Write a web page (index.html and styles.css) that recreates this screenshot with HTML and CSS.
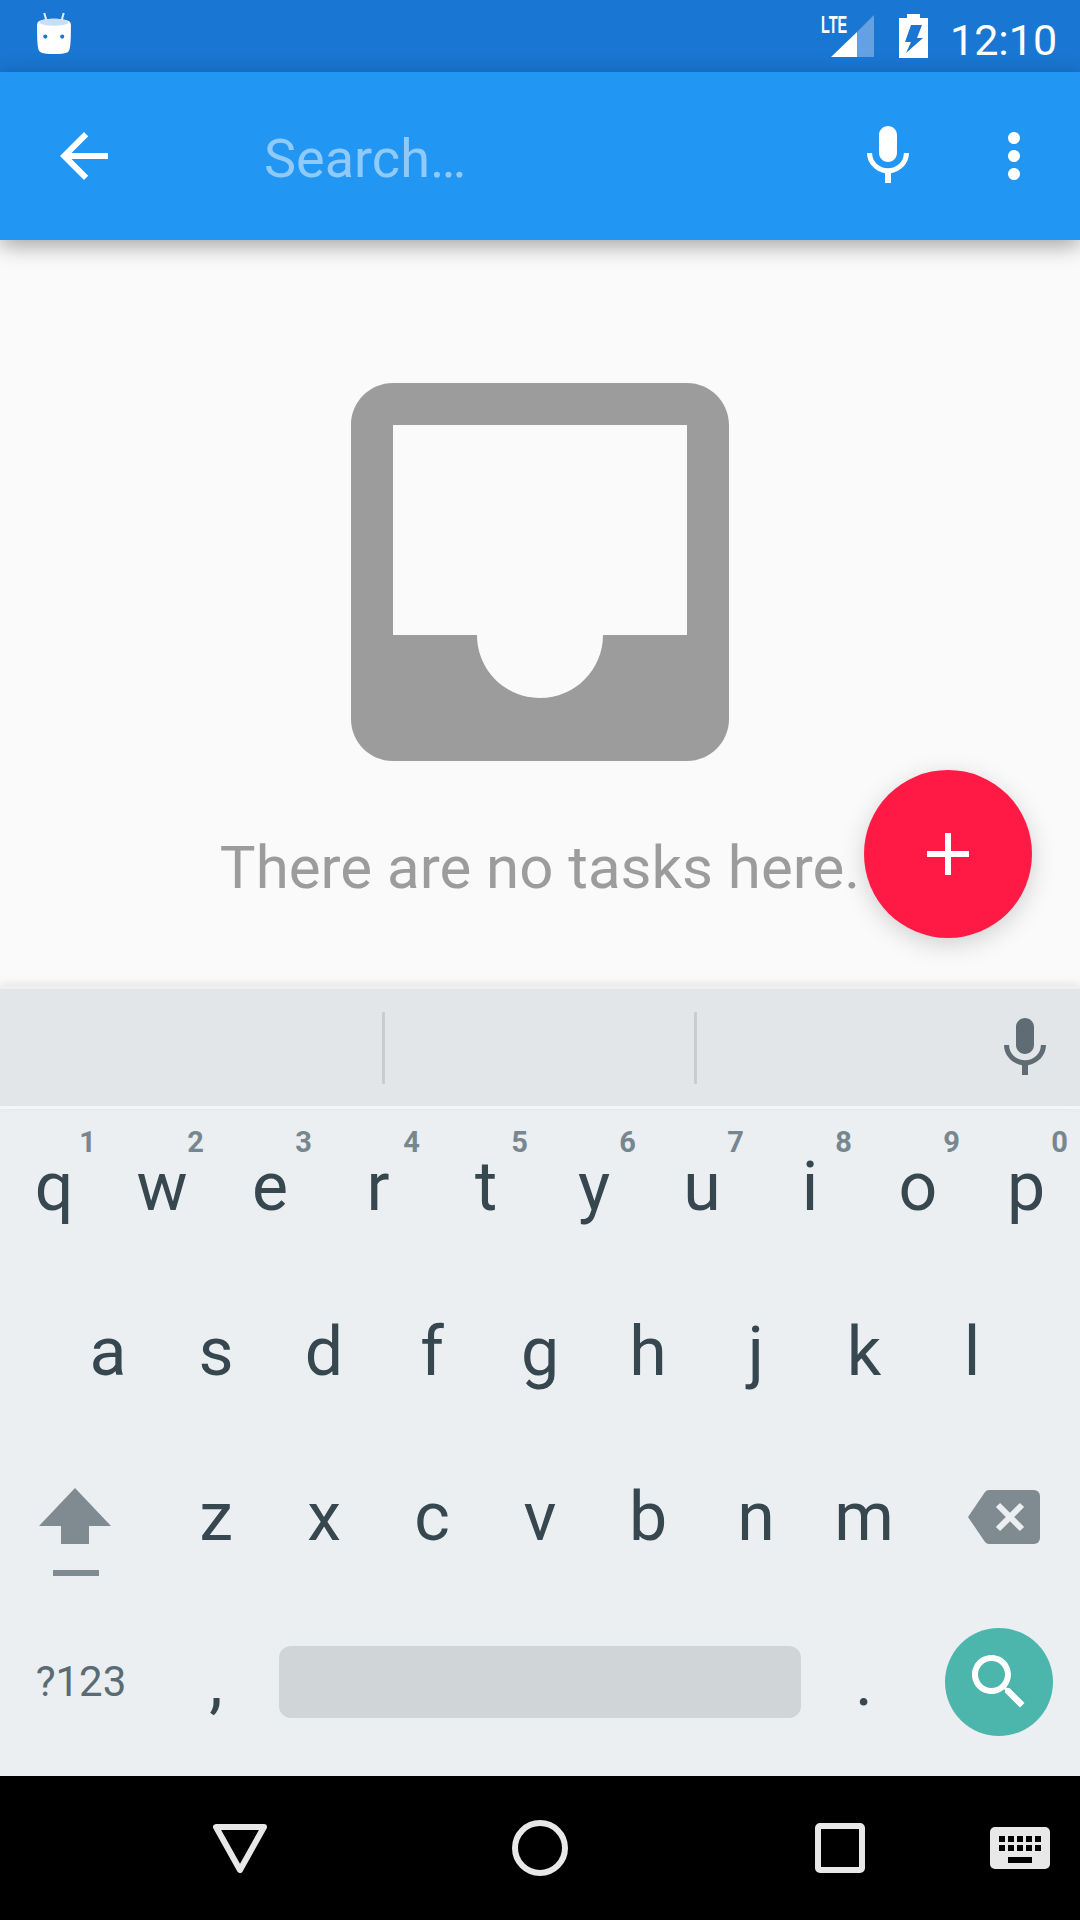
FILE: index.html
```html
<!DOCTYPE html>
<html lang="en">
<head>
    <meta charset="UTF-8">
    <meta name="viewport" content="width=device-width, initial-scale=1.0">
    <title>Tasks search</title>
    <link rel="stylesheet" href="styles.css">
</head>
<body>
<div class="phone">

    <!-- Status bar -->
    <div class="status-bar">
        <svg class="status-logo" width="34" height="42" viewBox="36 12 33 41">
            <path class="logo-ant" d="M43 13l2 7M62 13l-2 7"/>
            <path class="logo-body" d="M40 20c8-2 17-2 25 0 3 1 4 2 4 5 0 8 0 17-1 22-.3 3-2 5-4 5-8 1.500-15 1.500-23 0-2-.3-4-2-4-5-1-5-1-14-1-22 0-3 1-4 4-5z"/>
            <ellipse class="logo-top" cx="52.500" cy="22" rx="14" ry="3.500"/>
            <circle class="logo-eye" cx="44" cy="36" r="2"/>
            <circle class="logo-eye" cx="60.500" cy="36" r="2"/>
        </svg>
        <div class="status-right">
            <svg class="status-signal" width="53" height="50" viewBox="0 -8 53 50">
                <text class="lte-text" x="0" y="18" transform="scale(.63 1)">LTE</text>
                <path class="signal-dim" d="M53 0v42H36V17z"/>
                <path class="signal-full" d="M36 17v25H10z"/>
            </svg>
            <svg class="status-battery" width="29" height="44" viewBox="899 14 29 44">
                <path class="battery-body" d="M907 14h13v4h8v40h-29V18h8z"/>
                <path class="battery-bolt" d="M911 25h11l-5 13h6l-17 15 5-11h-6z"/>
            </svg>
            <span class="clock">12:10</span>
        </div>
    </div>

    <!-- Toolbar with search -->
    <div class="toolbar">
        <svg class="icon-72" viewBox="0 0 24 24"><path d="M20 11H7.830l5.590-5.590L12 4l-8 8 8 8 1.410-1.410L7.830 13H20v-2z"/></svg>
        <span class="search-hint">Search…</span>
        <svg class="icon-72" viewBox="0 0 24 24"><path d="M12 14c1.660 0 2.990-1.340 2.990-3L15 5c0-1.660-1.340-3-3-3S9 3.340 9 5v6c0 1.660 1.340 3 3 3zm5.300-3c0 3-2.540 5.100-5.300 5.100S6.700 14 6.700 11H5c0 3.410 2.720 6.230 6 6.720V21h2v-3.280c3.280-.48 6-3.300 6-6.720h-1.700z"/></svg>
        <svg class="icon-72 toolbar-more" viewBox="0 0 24 24"><path d="M12 8c1.100 0 2-.9 2-2s-.9-2-2-2-2 .9-2 2 .9 2 2 2zm0 2c-1.100 0-2 .9-2 2s.9 2 2 2 2-.9 2-2-.9-2-2-2zm0 6c-1.100 0-2 .9-2 2s.9 2 2 2 2-.9 2-2-.9-2-2-2z"/></svg>
    </div>

    <!-- Empty list -->
    <div class="content">
        <svg class="empty-icon" viewBox="3 3 18 18"><path d="M19 3H5c-1.100 0-2 .9-2 2v14c0 1.100.9 2 2 2h14c1.100 0 2-.9 2-2V5c0-1.100-.9-2-2-2zm0 12h-4c0 1.660-1.340 3-3 3s-3-1.340-3-3H5V5h14v10z"/></svg>
        <p class="empty-text">There are no tasks here.</p>
        <div class="fab">
            <svg width="42" height="42" viewBox="0 0 42 42"><path d="M18 0h6v18h18v6H24v18h-6V24H0v-6h18z"/></svg>
        </div>
    </div>

    <!-- Suggestion strip -->
    <div class="strip">
        <div class="strip-cell strip-cell-first"></div>
        <div class="strip-cell strip-cell-second"></div>
        <div class="strip-mic">
            <svg class="icon-72" viewBox="0 0 24 24"><path d="M12 14c1.660 0 2.990-1.340 2.990-3L15 5c0-1.660-1.340-3-3-3S9 3.340 9 5v6c0 1.660 1.340 3 3 3zm5.300-3c0 3-2.540 5.100-5.300 5.100S6.700 14 6.700 11H5c0 3.410 2.720 6.230 6 6.720V21h2v-3.280c3.280-.48 6-3.300 6-6.720h-1.700z"/></svg>
        </div>
    </div>

    <!-- Keyboard -->
    <div class="keyboard">
        <div class="kb-row">
            <div class="key">q<span class="key-num">1</span></div>
            <div class="key">w<span class="key-num">2</span></div>
            <div class="key">e<span class="key-num">3</span></div>
            <div class="key">r<span class="key-num">4</span></div>
            <div class="key">t<span class="key-num">5</span></div>
            <div class="key">y<span class="key-num">6</span></div>
            <div class="key">u<span class="key-num">7</span></div>
            <div class="key">i<span class="key-num">8</span></div>
            <div class="key">o<span class="key-num">9</span></div>
            <div class="key">p<span class="key-num">0</span></div>
        </div>
        <div class="kb-row kb-row-home">
            <div class="key">a</div>
            <div class="key">s</div>
            <div class="key">d</div>
            <div class="key">f</div>
            <div class="key">g</div>
            <div class="key">h</div>
            <div class="key">j</div>
            <div class="key">k</div>
            <div class="key">l</div>
        </div>
        <div class="kb-row">
            <div class="key key-wide key-shift">
                <svg width="72" height="118" viewBox="0 0 72 118"><path d="M36 30l36 38H50v18H22V68H0zM14 112h46v6H14z"/></svg>
            </div>
            <div class="key">z</div>
            <div class="key">x</div>
            <div class="key">c</div>
            <div class="key">v</div>
            <div class="key">b</div>
            <div class="key">n</div>
            <div class="key">m</div>
            <div class="key key-wide key-back">
                <svg width="72" height="54" viewBox="0 0 72 54">
                    <path class="back-shape" d="M21 0h45a6 6 0 0 1 6 6v42a6 6 0 0 1-6 6H21a6 6 0 0 1-4-2L0 27 17 2a6 6 0 0 1 4-2z"/>
                    <path class="back-x" d="M30 15l24 24M54 15L30 39"/>
                </svg>
            </div>
        </div>
        <div class="kb-row">
            <div class="key key-wide key-symbols">?123</div>
            <div class="key">,</div>
            <div class="key key-space"><div class="space-bar"></div></div>
            <div class="key">.</div>
            <div class="key key-wide">
                <div class="key-search">
                    <svg class="icon-72" viewBox="0 0 24 24"><path d="M15.500 14h-.79l-.28-.27C15.410 12.590 16 11.110 16 9.500 16 5.910 13.090 3 9.500 3S3 5.910 3 9.500 5.910 16 9.500 16c1.610 0 3.090-.59 4.230-1.570l.27.28v.79l5 4.990L20.490 19l-4.990-5zm-6 0C7.010 14 5 11.990 5 9.500S7.010 5 9.500 5 14 7.010 14 9.500 11.990 14 9.500 14z"/></svg>
                </div>
            </div>
        </div>
    </div>

    <!-- Navigation bar -->
    <div class="nav-bar">
        <div class="nav-btn">
            <svg class="nav-line" width="54" height="49" viewBox="0 0 54 49"><path d="M3 3h48L27 46z"/></svg>
        </div>
        <div class="nav-btn">
            <svg class="nav-line" width="56" height="56" viewBox="0 0 56 56"><circle cx="28" cy="28" r="25"/></svg>
        </div>
        <div class="nav-btn">
            <svg class="nav-line" width="50" height="50" viewBox="0 0 50 50"><rect x="3" y="3" width="44" height="44" rx="2"/></svg>
        </div>
        <svg class="nav-keyboard" width="60" height="42" viewBox="0 0 60 42">
            <path class="kbd-body" d="M5 0h50a5 5 0 0 1 5 5v32a5 5 0 0 1-5 5H5a5 5 0 0 1-5-5V5a5 5 0 0 1 5-5z"/>
            <path class="kbd-keys" d="M9 9h6v6H9zM18 9h6v6h-6zM27 9h6v6h-6zM36 9h6v6h-6zM45 9h6v6h-6zM9 18h6v6H9zM18 18h6v6h-6zM27 18h6v6h-6zM36 18h6v6h-6zM45 18h6v6h-6zM18 30h24v6H18z"/>
        </svg>
    </div>

</div>
</body>
</html>
```

FILE: styles.css
```css
body {
    margin: 0;
    font-family: Roboto, "Noto Sans", sans-serif;
}
.phone {
    width: 1080px;
    height: 1920px;
    display: flex;
    flex-direction: column;
    overflow: hidden;
    background-color: #fafafa;
}
.icon-72 {
    width: 72px;
    height: 72px;
    fill: #fff;
    flex: none;
}

/* status bar */
.status-bar {
    height: 72px;
    flex: none;
    display: flex;
    align-items: flex-start;
    justify-content: space-between;
    padding: 12px 26px 0 37px;
    box-sizing: border-box;
    background-color: #1976d2;
}
.logo-ant {
    fill: none;
    stroke: #e3eefa;
    stroke-width: 2;
}
.logo-body {
    fill: #fff;
}
.logo-top {
    fill: #c9def5;
}
.logo-eye {
    fill: #1976d2;
}
.status-right {
    display: flex;
    align-items: flex-start;
}
.status-signal {
    margin-top: -5px;
    margin-right: 25px;
}
.status-battery {
    margin-top: 2px;
    margin-right: 22px;
}
.lte-text {
    font-family: "Liberation Sans", sans-serif;
    font-size: 23px;
    font-weight: 700;
    fill: #fff;
}
.signal-dim {
    fill: #64a1e2;
}
.signal-full {
    fill: #fff;
}
.battery-body {
    fill: #fff;
}
.battery-bolt {
    fill: #1976d2;
}
.clock {
    color: #fff;
    font-size: 43px;
    line-height: 56px;
    width: 104px;
    white-space: nowrap;
}

/* toolbar */
.toolbar {
    height: 168px;
    flex: none;
    display: flex;
    align-items: center;
    padding: 0 30px 0 48px;
    box-sizing: border-box;
    background-color: #2196f3;
    box-shadow: 0 6px 20px rgba(0, 0, 0, 0.34);
    position: relative;
    z-index: 2;
}
.search-hint {
    flex: 1;
    margin-left: 144px;
    margin-top: 4px;
    color: #90caf9;
    font-size: 54px;
}
.toolbar-more {
    margin-left: 54px;
}

/* empty state */
.content {
    flex: 1;
    position: relative;
    display: flex;
    flex-direction: column;
    align-items: center;
    padding-top: 143px;
    box-sizing: border-box;
}
.empty-icon {
    width: 378px;
    height: 378px;
    fill: #9c9c9c;
    flex: none;
}
.empty-text {
    margin: 74px 0 0;
    font-size: 60px;
    line-height: 66px;
    color: #9c9c9c;
    white-space: nowrap;
}
.fab {
    position: absolute;
    left: 864px;
    top: 530px;
    width: 168px;
    height: 168px;
    border-radius: 50%;
    background-color: #ff1a46;
    box-shadow: 0 6px 24px rgba(0, 0, 0, 0.17);
    display: flex;
    align-items: center;
    justify-content: center;
}
.fab svg {
    fill: #fff;
}

/* suggestion strip */
.strip {
    height: 117px;
    flex: none;
    display: flex;
    align-items: center;
    border-top: 3px solid #efefef;
    border-bottom: 3px solid #f3f5f6;
    background-color: #e2e6e9;
    box-shadow: 0 -3px 8px rgba(0, 0, 0, 0.08);
    position: relative;
}
.strip-cell {
    height: 72px;
    border-right: 3px solid #c9cdd0;
    box-sizing: border-box;
}
.strip-cell-first {
    width: 385px;
}
.strip-cell-second {
    width: 312px;
}
.strip-mic {
    flex: 1;
    display: flex;
    justify-content: flex-end;
    padding-right: 19px;
}
.strip-mic .icon-72 {
    fill: #5f6c73;
}

/* keyboard */
.keyboard {
    height: 667px;
    flex: none;
    background-color: #ebeff2;
}
.kb-row {
    height: 165px;
    display: flex;
}
.kb-row-home {
    padding-left: 54px;
}
.key {
    width: 108px;
    position: relative;
    display: flex;
    align-items: center;
    justify-content: center;
    padding-bottom: 9px;
    box-sizing: border-box;
    font-size: 68px;
    line-height: 1;
    color: #37474f;
}
.key-num {
    position: absolute;
    top: 19px;
    right: 12px;
    font-size: 29px;
    font-weight: 700;
    line-height: 1;
    color: #78878f;
}
.key-wide {
    width: 162px;
}
.key-shift {
    padding-right: 12px;
}
.key-shift svg {
    fill: #7f8b90;
}
.key-back {
    padding-left: 10px;
}
.back-shape {
    fill: #7f8b90;
}
.back-x {
    fill: none;
    stroke: #ebeff2;
    stroke-width: 6;
}
.key-symbols {
    font-size: 42px;
    color: #5a6b74;
}
.key-space {
    width: 540px;
    padding-left: 9px;
    padding-right: 9px;
}
.space-bar {
    width: 100%;
    height: 72px;
    border-radius: 12px;
    background-color: #d0d5d8;
}
.key-search {
    width: 108px;
    height: 108px;
    border-radius: 50%;
    background-color: #4db6ac;
    display: flex;
    align-items: center;
    justify-content: center;
}

/* navigation bar */
.nav-bar {
    height: 144px;
    flex: none;
    display: flex;
    align-items: center;
    padding-left: 90px;
    box-sizing: border-box;
    background-color: #000;
}
.nav-btn {
    width: 300px;
    display: flex;
    justify-content: center;
}
.nav-line {
    fill: none;
    stroke: #e8e8e8;
    stroke-width: 6;
    stroke-linejoin: round;
}
.kbd-body {
    fill: #e8e8e8;
}
.kbd-keys {
    fill: #000;
}
```
